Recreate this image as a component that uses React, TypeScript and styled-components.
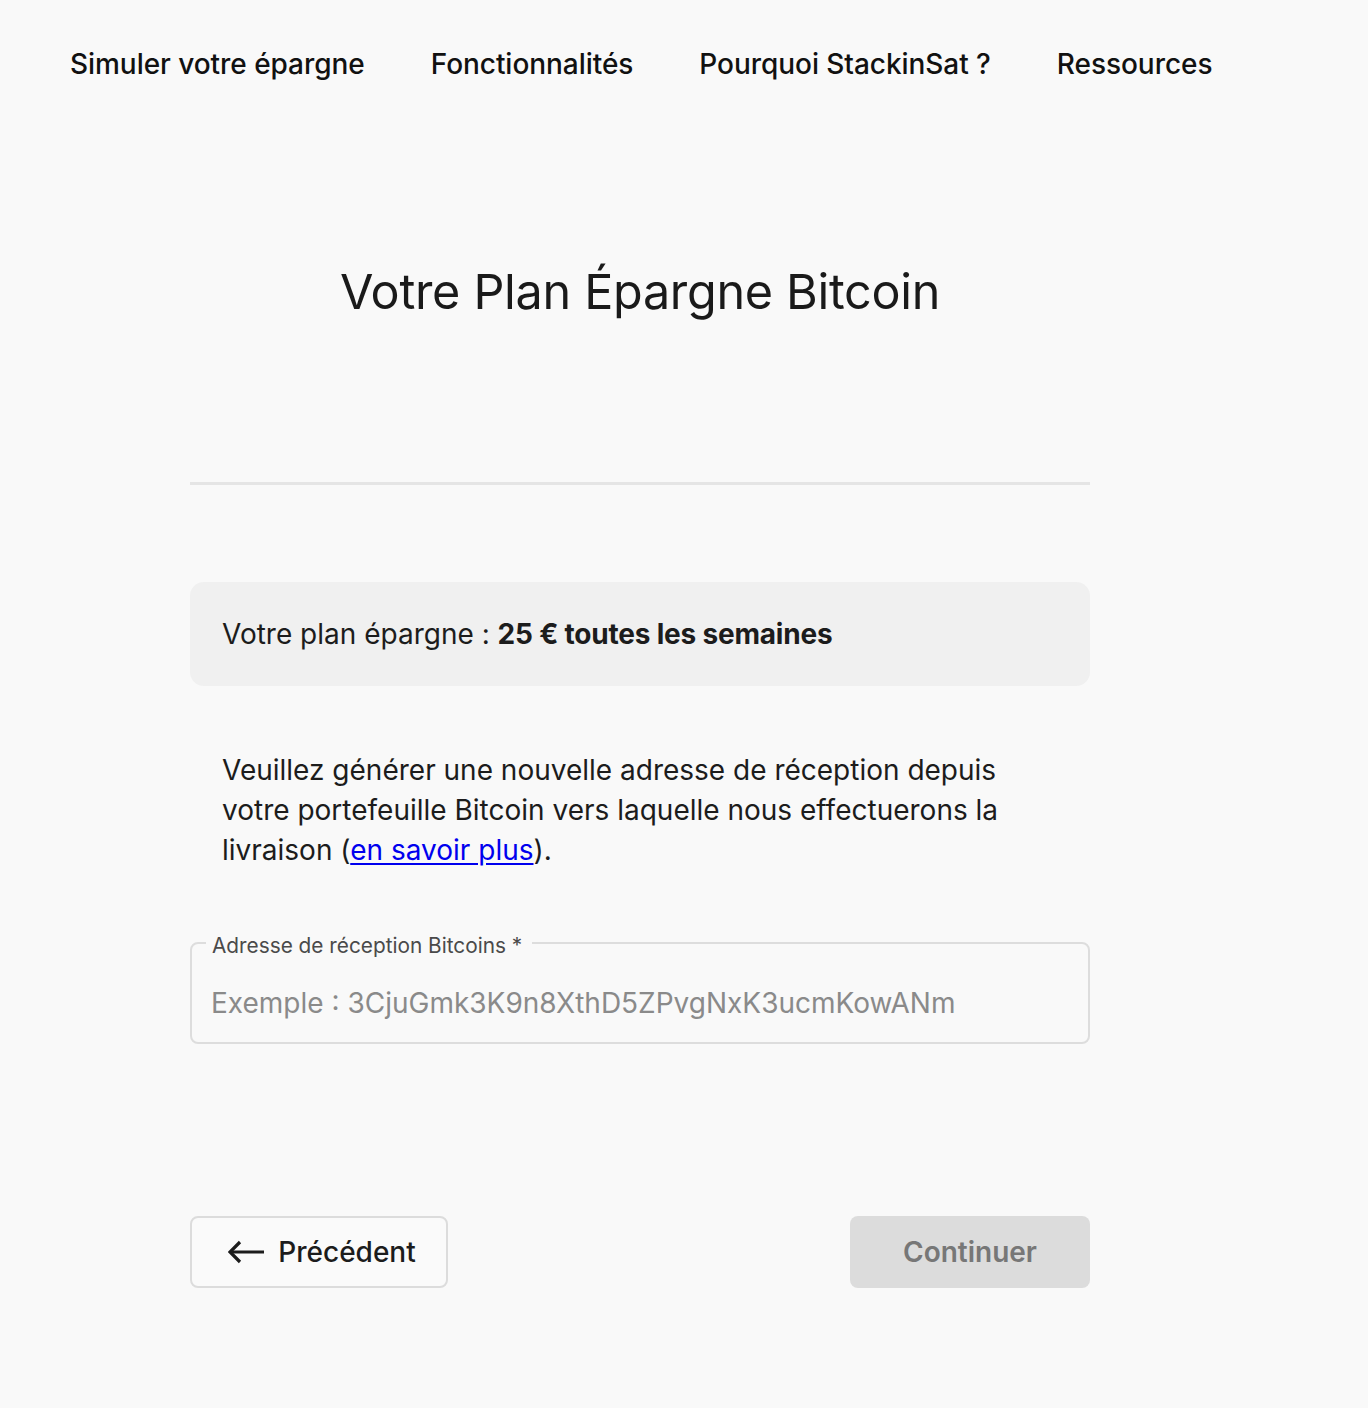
import React from "react";
import styled, { createGlobalStyle } from "styled-components";

const Global = createGlobalStyle`
  html, body { margin: 0; padding: 0; background: #f9f9f9; }
  body { font-family: Inter, "Noto Sans", sans-serif; color: #1c1c1c; }
  * { box-sizing: border-box; }
`;

const Page = styled.div`
  min-height: 1408px;
  background: #f9f9f9;
`;

const Nav = styled.nav`
  display: flex;
  gap: 66px;
  padding: 46px 0 0 70px;
`;

const NavLink = styled.a`
  font-size: 28px;
  line-height: 36px;
  font-weight: 500;
  color: #111;
  text-decoration: none;
  letter-spacing: -0.05px;
`;

const Column = styled.main`
  width: 900px;
  margin-left: 190px;
  display: flex;
  flex-direction: column;
`;

const Title = styled.h1`
  margin: 0;
  margin-top: 178px;
  text-align: center;
  font-size: 48.5px;
  line-height: 64px;
  font-weight: 400;
  color: #1a1a1a;
  letter-spacing: -0.3px;
`;

const Divider = styled.hr`
  margin: 158px 0 0;
  border: none;
  height: 3px;
  background: #e5e5e5;
`;

const Summary = styled.div`
  margin-top: 97px;
  height: 104px;
  border-radius: 14px;
  background: #f0f0f0;
  display: flex;
  align-items: center;
  padding: 0 32px;
  font-size: 28px;
  color: #1c1c1c;
  b { font-weight: 700; letter-spacing: -0.2px; }
`;

const Paragraph = styled.p`
  margin: 64px 0 0;
  padding: 0 32px;
  font-size: 28px;
  line-height: 40px;
  color: #1c1c1c;
  a { color: #0000ee; text-decoration: underline; text-underline-offset: 3px; }
`;

const Field = styled.fieldset`
  margin: 60px 0 0;
  padding: 0 20px;
  border: 2px solid #dddddd;
  border-radius: 8px;
`;

const Legend = styled.legend`
  padding: 6px 10px 0 6px;
  margin-left: -6px;
  font-size: 20.8px;
  line-height: 20px;
  color: #4a4a4a;
`;

const Input = styled.input`
  display: block;
  width: 100%;
  height: 86px;
  padding: 8px 0 0;
  margin-left: -1px;
  border: none;
  outline: none;
  background: transparent;
  font-family: Inter, "Noto Sans", sans-serif;
  font-size: 28px;
  color: #1c1c1c;
  &::placeholder { color: #8a8a8a; }
`;

const Actions = styled.div`
  margin-top: 172px;
  display: flex;
  justify-content: space-between;
`;

const Button = styled.button<{ $variant: "outline" | "disabled" }>`
  height: 72px;
  border-radius: 8px;
  font-family: Inter, "Noto Sans", sans-serif;
  font-size: 28px;
  display: flex;
  align-items: center;
  justify-content: center;
  gap: 14px;
  ${(p) =>
    p.$variant === "outline"
      ? `
    width: 258px;
    padding: 0 0 0 6px;
    background: #fafafa;
    border: 2px solid #dcdcdc;
    color: #1c1c1c;
    font-weight: 500;
  `
      : `
    width: 240px;
    padding: 0;
    background: #dcdcdc;
    border: none;
    color: #777;
    font-weight: 600;
  `}
`;

const Arrow = () => (
  <svg width="36" height="24" viewBox="0 0 36 24" fill="none" stroke="#1c1c1c" strokeWidth="3.2" strokeLinecap="butt">
    <path d="M2 12 H36" />
    <path d="M12 2 L2 12 L12 22" strokeLinejoin="miter" />
  </svg>
);

export default function App() {
  return (
    <Page>
      <Global />
      <Nav>
        <NavLink href="#">Simuler votre épargne</NavLink>
        <NavLink href="#">Fonctionnalités</NavLink>
        <NavLink href="#">Pourquoi StackinSat ?</NavLink>
        <NavLink href="#">Ressources</NavLink>
      </Nav>
      <Column>
        <Title>Votre Plan Épargne Bitcoin</Title>
        <Divider />
        <Summary>
          <span>
            Votre plan épargne : <b>25 € toutes les semaines</b>
          </span>
        </Summary>
        <Paragraph>
          Veuillez générer une nouvelle adresse de réception depuis votre portefeuille Bitcoin vers laquelle nous
          effectuerons la livraison (<a href="#">en savoir plus</a>).
        </Paragraph>
        <Field>
          <Legend>Adresse de réception Bitcoins *</Legend>
          <Input placeholder="Exemple : 3CjuGmk3K9n8XthD5ZPvgNxK3ucmKowANm" />
        </Field>
        <Actions>
          <Button $variant="outline">
            <Arrow />
            Précédent
          </Button>
          <Button $variant="disabled">Continuer</Button>
        </Actions>
      </Column>
    </Page>
  );
}
